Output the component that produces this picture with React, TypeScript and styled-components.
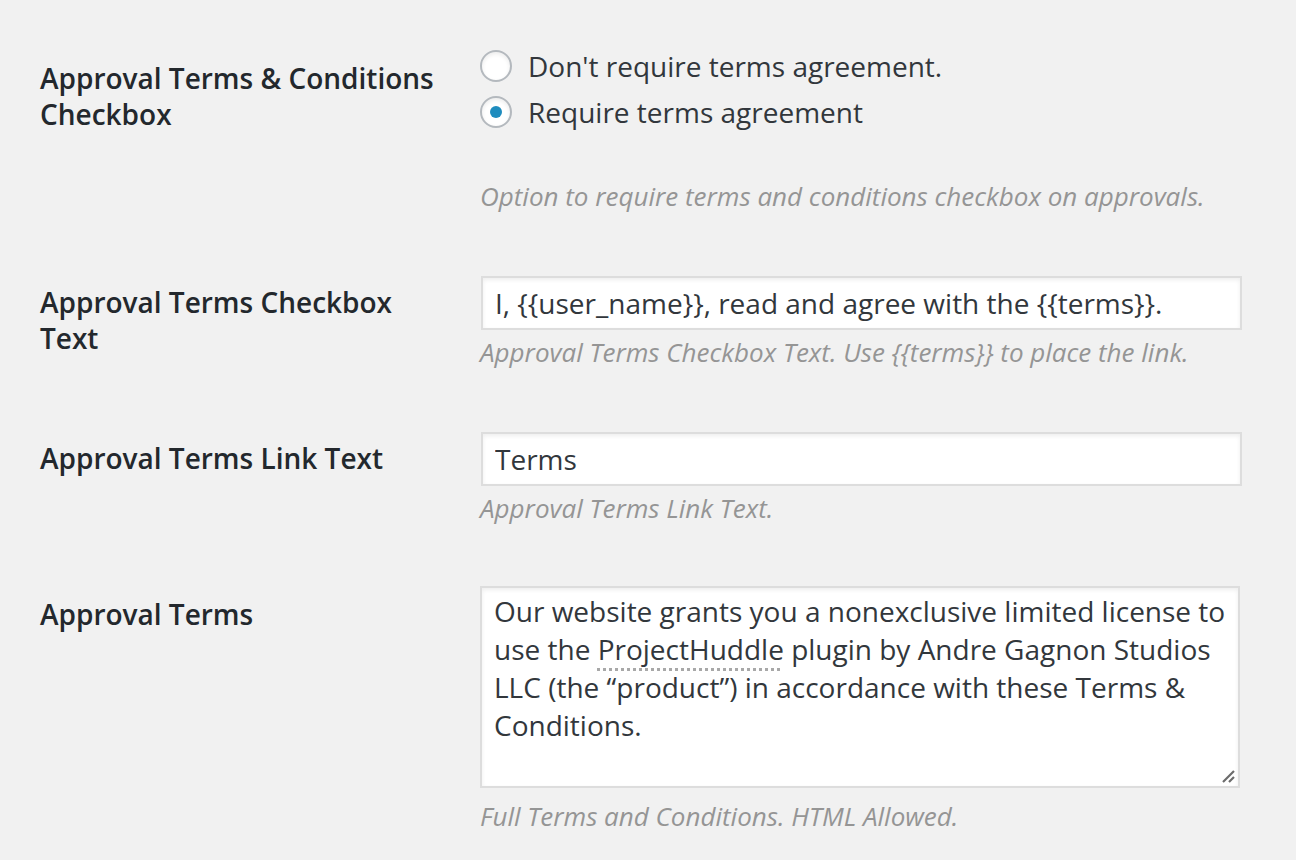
import React, { useState } from "react";
import styled, { createGlobalStyle } from "styled-components";

const GlobalStyle = createGlobalStyle`
    html, body {
        margin: 0;
        padding: 0;
        background: #f1f1f1;
    }
    body {
        font-family: "Open Sans", "Noto Sans", sans-serif;
        color: #32373c;
    }
    * { box-sizing: border-box; }
`;

const Page = styled.div`
    width: 1296px;
    height: 860px;
    padding: 45px 0 0 40px;
    overflow: hidden;
`;
const Row = styled.div<{ $gap?: number }>`
    display: grid;
    grid-template-columns: 400px 762px;
    column-gap: 40px;
    margin-bottom: ${p => p.$gap ?? 62}px;
`;
const Label = styled.div<{ $offset: number }>`
    padding-top: ${p => p.$offset}px;
    font-size: 28px;
    line-height: 36px;
    font-weight: 600;
    color: #23282d;
`;
const Field = styled.div`
    display: flex;
    flex-direction: column;
`;
const Fieldset = styled.fieldset`
    border: 0;
    margin: -2px 0 0;
    padding: 0;
`;
const RadioRow = styled.label`
    display: flex;
    align-items: center;
    height: 46px;
    font-size: 28px;
    color: #32373c;
    cursor: pointer;
`;
const RadioCircle = styled.span<{ $checked: boolean }>`
    width: 32px;
    height: 32px;
    margin-right: 16px;
    border-radius: 50%;
    border: 2px solid #b4b9be;
    background: #fff;
    box-shadow: inset 0 2px 4px rgba(0, 0, 0, 0.08);
    display: flex;
    align-items: center;
    justify-content: center;
    &::after {
        content: "";
        display: ${p => (p.$checked ? "block" : "none")};
        width: 12px;
        height: 12px;
        border-radius: 50%;
        background: #1e8cbe;
    }
`;
const Description = styled.p<{ $top?: number }>`
    margin: ${p => p.$top ?? 4}px 0 0;
    font-size: 26px;
    line-height: 36px;
    font-style: italic;
    color: #959595;
`;
const TextInput = styled.input`
    width: 761px;
    height: 54px;
    margin: 0 0 0 1px;
    padding: 0 12px;
    border: 2px solid #ddd;
    background: #fff;
    box-shadow: inset 0 2px 4px rgba(0, 0, 0, 0.07);
    font-family: inherit;
    font-size: 28px;
    color: #32373c;
    outline: none;
`;
const TextBox = styled.div`
    position: relative;
    width: 760px;
    height: 202px;
    padding: 4px 6px 0 12px;
    border: 2px solid #ddd;
    background: #fff;
    box-shadow: inset 0 2px 4px rgba(0, 0, 0, 0.07);
    font-size: 28px;
    line-height: 38px;
    color: #32373c;
`;
const Misspelled = styled.span`
    text-decoration: underline dotted #a8a8a8;
    text-decoration-thickness: 3px;
    text-underline-offset: 8px;
`;
const Grip = styled.svg`
    position: absolute;
    right: 2px;
    bottom: 2px;
`;

const Radio = ({ checked, label, onSelect }: { checked: boolean; label: string; onSelect: () => void }) => (
    <RadioRow onClick={onSelect}>
        <RadioCircle $checked={checked} />
        {label}
    </RadioRow>
);

export default function App() {
    const [requireTerms, setRequireTerms] = useState(true);
    const [checkboxText, setCheckboxText] = useState("I, {{user_name}}, read and agree with the {{terms}}.");
    const [linkText, setLinkText] = useState("Terms");
    return (
        <Page>
            <GlobalStyle />
            <Row>
                <Label $offset={15}>Approval Terms &amp; Conditions Checkbox</Label>
                <Field>
                    <Fieldset>
                        <Radio checked={!requireTerms} label="Don't require terms agreement." onSelect={() => setRequireTerms(false)} />
                        <Radio checked={requireTerms} label="Require terms agreement" onSelect={() => setRequireTerms(true)} />
                    </Fieldset>
                    <Description $top={43}>Option to require terms and conditions checkbox on approvals.</Description>
                </Field>
            </Row>
            <Row>
                <Label $offset={8}>Approval Terms Checkbox Text</Label>
                <Field>
                    <TextInput value={checkboxText} onChange={e => setCheckboxText(e.target.value)} />
                    <Description>Approval Terms Checkbox Text. Use {"{{terms}}"} to place the link.</Description>
                </Field>
            </Row>
            <Row $gap={60}>
                <Label $offset={8}>Approval Terms Link Text</Label>
                <Field>
                    <TextInput value={linkText} onChange={e => setLinkText(e.target.value)} />
                    <Description>Approval Terms Link Text.</Description>
                </Field>
            </Row>
            <Row>
                <Label $offset={10}>Approval Terms</Label>
                <Field>
                    <TextBox>
                        Our website grants you a nonexclusive limited license to use the <Misspelled>ProjectHuddle</Misspelled> plugin by Andre Gagnon Studios LLC (the “product”) in accordance with these Terms &amp; Conditions.
                        <Grip width="16" height="16" viewBox="0 0 16 16">
                            <path d="M3 14 L14 3 M9 14 L14 9" stroke="#6c6c6c" strokeWidth="2.2" />
                        </Grip>
                    </TextBox>
                    <Description $top={10}>Full Terms and Conditions. HTML Allowed.</Description>
                </Field>
            </Row>
        </Page>
    );
}
